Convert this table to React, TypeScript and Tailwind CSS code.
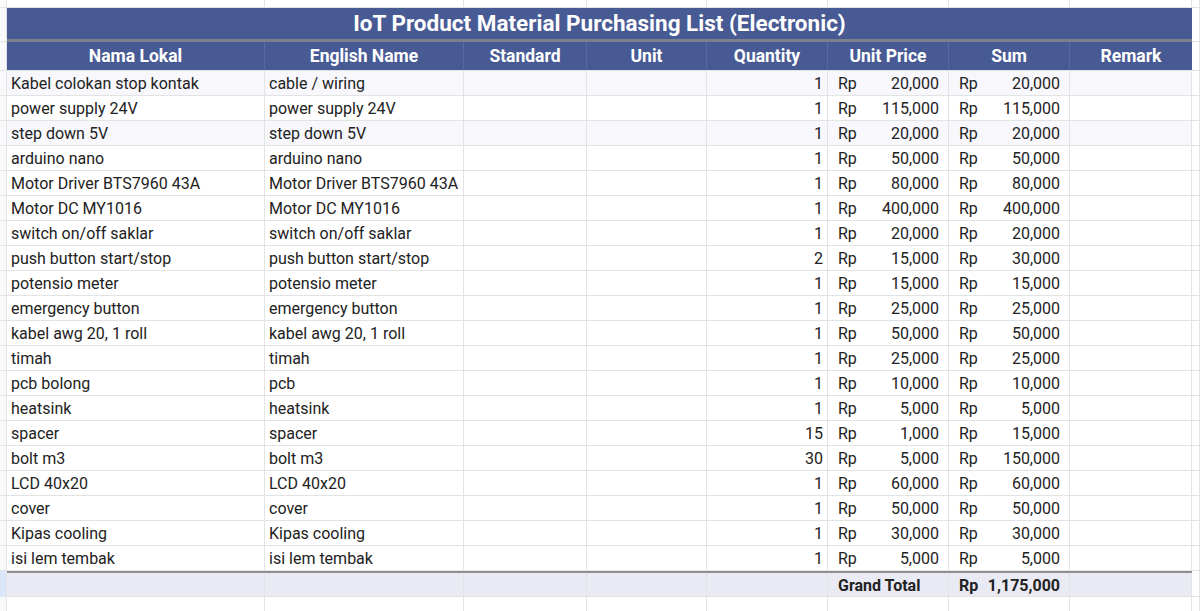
import React from 'react'

type Item = [string, string, number, number]

const items: Item[] = [
  ['Kabel colokan stop kontak', 'cable / wiring', 1, 20000],
  ['power supply 24V', 'power supply 24V', 1, 115000],
  ['step down 5V', 'step down 5V', 1, 20000],
  ['arduino nano', 'arduino nano', 1, 50000],
  ['Motor Driver BTS7960 43A', 'Motor Driver BTS7960 43A', 1, 80000],
  ['Motor DC MY1016', 'Motor DC MY1016', 1, 400000],
  ['switch on/off saklar', 'switch on/off saklar', 1, 20000],
  ['push button start/stop', 'push button start/stop', 2, 15000],
  ['potensio meter', 'potensio meter', 1, 15000],
  ['emergency button', 'emergency button', 1, 25000],
  ['kabel awg 20, 1 roll', 'kabel awg 20, 1 roll', 1, 50000],
  ['timah', 'timah', 1, 25000],
  ['pcb bolong', 'pcb', 1, 10000],
  ['heatsink', 'heatsink', 1, 5000],
  ['spacer', 'spacer', 15, 1000],
  ['bolt m3', 'bolt m3', 30, 5000],
  ['LCD 40x20', 'LCD 40x20', 1, 60000],
  ['cover', 'cover', 1, 50000],
  ['Kipas cooling', 'Kipas cooling', 1, 30000],
  ['isi lem tembak', 'isi lem tembak', 1, 5000],
]

const fmt = (n: number) => n.toLocaleString('en-US')

const grid = 'border-r border-b border-[#e2e3e3]'
const headCell = 'flex h-full items-center justify-center border-r border-[#5b6a9c] pt-[1px] font-bold text-white'

// montant au format comptable : « Rp » à gauche, nombre à droite
function Money({ value, bold }: { value: number; bold?: boolean }) {
  return (
    <div className={`flex h-full items-center justify-between pt-[2px] pl-[10px] pr-[9px] ${bold ? 'font-bold' : ''}`}>
      <span>Rp</span>
      <span>{fmt(value)}</span>
    </div>
  )
}

export default function App() {
  const total = items.reduce((s, [, , q, p]) => s + q * p, 0)

  return (
    <div className="h-[611px] w-[1200px] overflow-hidden bg-white text-[16px] text-[#222] [font-family:Roboto,'Noto_Sans',sans-serif]">
      {/* ligne vide du haut */}
      <div className="flex h-[8px]">
        <div className={`w-[7px] bg-[#f8f9fa] ${grid}`} />
        <div className={`w-[258px] ${grid}`} />
        <div className={`w-[199px] ${grid}`} />
        <div className={`w-[123px] ${grid}`} />
        <div className={`w-[120px] ${grid}`} />
        <div className={`w-[121px] ${grid}`} />
        <div className={`w-[121px] ${grid}`} />
        <div className={`w-[121px] ${grid}`} />
        <div className={`w-[122px] ${grid}`} />
        <div className={`flex-1 ${grid}`} />
      </div>

      {/* titre fusionné */}
      <div className="flex h-[34px]">
        <div className={`w-[7px] bg-[#f8f9fa] ${grid}`} />
        <div className="flex w-[1185px] items-center justify-center border-b-[3px] border-[#7c808c] bg-[#485a94] pt-[1px] text-[22.5px] font-bold text-white">
          IoT Product Material Purchasing List (Electronic)
        </div>
        <div className={`flex-1 ${grid}`} />
      </div>

      {/* en-têtes */}
      <div className="flex h-[29px] text-[17.5px]">
        <div className={`w-[7px] bg-[#f8f9fa] ${grid}`} />
        <div className="flex w-[1185px] border-b border-[#e2e3e3] bg-[#485a94]">
          <div className={`w-[258px] ${headCell}`}>Nama Lokal</div>
          <div className={`w-[199px] ${headCell}`}>English Name</div>
          <div className={`w-[123px] ${headCell}`}>Standard</div>
          <div className={`w-[120px] ${headCell}`}>Unit</div>
          <div className={`w-[121px] ${headCell}`}>Quantity</div>
          <div className={`w-[121px] ${headCell}`}>Unit Price</div>
          <div className={`w-[121px] ${headCell}`}>Sum</div>
          <div className="flex w-[122px] items-center justify-center pt-[1px] font-bold text-white">Remark</div>
        </div>
        <div className={`flex-1 ${grid}`} />
      </div>

      {items.map(([lokal, english, qty, price], i) => {
        const tint = i === 0 || i === 2 ? 'bg-[#f7f7fc]' : 'bg-white'
        return (
          <div key={i} className="flex h-[25px]">
            <div className={`w-[7px] bg-[#f8f9fa] ${grid}`} />
            <div className={`flex w-[1185px] ${tint}`}>
              <div className={`flex w-[258px] items-center pt-[2px] pl-[4px] ${grid}`}>{lokal}</div>
              <div className={`flex w-[199px] items-center pt-[2px] pl-[4px] ${grid}`}>{english}</div>
              <div className={`w-[123px] ${grid}`} />
              <div className={`w-[120px] ${grid}`} />
              <div className={`flex w-[121px] items-center justify-end pt-[2px] pr-[4px] ${grid}`}>{qty}</div>
              <div className={`w-[121px] ${grid}`}>
                <Money value={price} />
              </div>
              <div className={`w-[121px] ${grid}`}>
                <Money value={qty * price} />
              </div>
              <div className={`w-[122px] ${grid}`} />
            </div>
            <div className={`flex-1 ${grid}`} />
          </div>
        )
      })}

      {/* total général */}
      <div className="flex h-[26px]">
        <div className={`w-[7px] bg-[#dbe6fb] ${grid}`} />
        <div className="flex w-[1185px] border-t-2 border-[#8f9096] bg-[#e9eaf4]">
          <div className={`w-[258px] ${grid}`} />
          <div className={`w-[199px] ${grid}`} />
          <div className={`w-[123px] ${grid}`} />
          <div className={`w-[120px] ${grid}`} />
          <div className={`w-[121px] ${grid}`} />
          <div className={`flex w-[121px] items-center pt-[2px] pl-[10px] font-bold ${grid}`}>Grand Total</div>
          <div className={`w-[121px] ${grid}`}>
            <Money value={total} bold />
          </div>
          <div className={`w-[122px] ${grid}`} />
        </div>
        <div className={`flex-1 ${grid}`} />
      </div>

      <div className="flex h-[25px]">
        <div className={`w-[7px] bg-[#f8f9fa] ${grid}`} />
        <div className={`w-[258px] ${grid}`} />
        <div className={`w-[199px] ${grid}`} />
        <div className={`w-[123px] ${grid}`} />
        <div className={`w-[120px] ${grid}`} />
        <div className={`w-[121px] ${grid}`} />
        <div className={`w-[121px] ${grid}`} />
        <div className={`w-[121px] ${grid}`} />
        <div className={`w-[122px] ${grid}`} />
        <div className={`flex-1 ${grid}`} />
      </div>
    </div>
  )
}
